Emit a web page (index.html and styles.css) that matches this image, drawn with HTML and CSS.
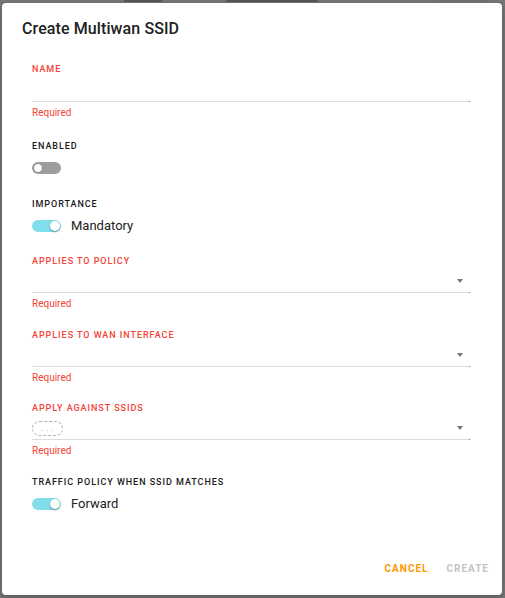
FILE: index.html
```html
<!DOCTYPE html>
<html lang="en">
<head>
<meta charset="utf-8">
<title>Create Multiwan SSID</title>
<link rel="stylesheet" href="styles.css">
</head>
<body>
<div class="backdrop">
  <div class="bg-row">
    <span class="bg-mark bg-a"></span>
    <span class="bg-mark bg-b"></span>
    <span class="bg-pill"></span>
  </div>
  <div class="dialog">
    <h1 class="title">Create Multiwan SSID</h1>
    <div class="form">
      <div class="field f-name">
        <div class="label err">NAME</div>
        <div class="input text"><span class="end-dot"></span></div>
        <div class="helper">Required</div>
      </div>

      <div class="field f-enabled">
        <div class="label">ENABLED</div>
        <div class="switch-row">
          <span class="switch off"><span class="thumb"></span></span>
        </div>
      </div>

      <div class="field f-importance">
        <div class="label">IMPORTANCE</div>
        <div class="switch-row">
          <span class="switch on"><span class="thumb"></span></span>
          <span class="switch-text">Mandatory</span>
        </div>
      </div>

      <div class="field f-policy">
        <div class="label err">APPLIES TO POLICY</div>
        <div class="input select"><span class="arrow"></span><span class="end-dot"></span></div>
        <div class="helper">Required</div>
      </div>

      <div class="field f-wan">
        <div class="label err">APPLIES TO WAN INTERFACE</div>
        <div class="input select"><span class="arrow"></span><span class="end-dot"></span></div>
        <div class="helper">Required</div>
      </div>

      <div class="field f-ssids">
        <div class="label err">APPLY AGAINST SSIDS</div>
        <div class="input select chips"><span class="chip">. . .</span><span class="arrow"></span><span class="end-dot"></span></div>
        <div class="helper">Required</div>
      </div>

      <div class="field f-traffic">
        <div class="label">TRAFFIC POLICY WHEN SSID MATCHES</div>
        <div class="switch-row">
          <span class="switch on"><span class="thumb"></span></span>
          <span class="switch-text">Forward</span>
        </div>
      </div>
    </div>
    <div class="actions">
      <button class="btn cancel">CANCEL</button>
      <button class="btn create" disabled>CREATE</button>
    </div>
  </div>
</div>
</body>
</html>
```
FILE: styles.css
```css
* { box-sizing: border-box; }
html, body {
  margin: 0;
  padding: 0;
  width: 505px;
  height: 598px;
  overflow: hidden;
  font-family: Roboto, "Noto Sans", "Liberation Sans", sans-serif;
}
.backdrop {
  position: relative;
  width: 505px;
  height: 598px;
  background: #777777;
  padding: 3px 0 0 2px;
}
.bg-row {
  position: absolute;
  top: 0;
  left: 0;
  width: 505px;
  height: 3px;
  overflow: hidden;
}
.bg-mark {
  position: absolute;
  top: 0;
  height: 2px;
  background: #555555;
  filter: blur(0.5px);
}
.bg-a { left: 124px; width: 38px; }
.bg-b { left: 226px; width: 92px; }
.bg-pill {
  position: absolute;
  top: 0;
  left: 436px;
  width: 54px;
  height: 8px;
  border-radius: 8px;
  background: #6e6e6e;
}
.dialog {
  width: 500px;
  height: 592px;
  background: #ffffff;
  border-radius: 4px;
  display: flex;
  flex-direction: column;
  padding: 16px 0 0 0;
  box-shadow: 0 2px 6px rgba(0,0,0,0.3);
}
.title {
  margin: 0;
  padding: 0 20px;
  font-size: 16px;
  line-height: 20px;
  font-weight: 500;
  letter-spacing: 0.1px;
  color: #212121;
}
.form {
  padding: 0 32px 0 30px;
  display: flex;
  flex-direction: column;
}
.label {
  font-size: 9px;
  line-height: 12px;
  font-weight: 500;
  letter-spacing: 0.95px;
  color: #1a1a1a;
}
.label.err { color: #f44336; }
.input {
  position: relative;
  height: 27px;
  border-bottom: 1px solid #dcdcdc;
}
.input.select { height: 26px; }
.end-dot {
  position: absolute;
  right: 0;
  bottom: -1px;
  width: 1px;
  height: 1px;
  background: #f44336;
}
.arrow {
  position: absolute;
  right: 7px;
  top: 12px;
  width: 0;
  height: 0;
  border-left: 3.5px solid transparent;
  border-right: 3.5px solid transparent;
  border-top: 4px solid #757575;
}
.chips { display: flex; align-items: flex-start; padding-top: 7px; }
.chip {
  display: inline-flex;
  align-items: center;
  justify-content: center;
  width: 31px;
  height: 15px;
  border: 1px dashed #b0b0b0;
  border-radius: 8px;
  font-size: 8px;
  line-height: 8px;
  color: #9e9e9e;
  letter-spacing: 0.5px;
}
.helper {
  margin-top: 5px;
  font-size: 10px;
  line-height: 12px;
  color: #f44336;
}
.f-name { margin-top: 24px; }
.f-enabled { margin-top: 21px; }
.f-importance { margin-top: 24px; }
.f-policy { margin-top: 23px; }
.f-wan { margin-top: 19px; }
.f-ssids { margin-top: 18px; }
.f-traffic { margin-top: 19px; }
.switch-row {
  margin-top: 10px;
  height: 12px;
  display: flex;
  align-items: center;
  gap: 10px;
}
.switch {
  position: relative;
  width: 29px;
  height: 12px;
  border-radius: 6px;
  flex: none;
}
.switch.off { background: #9e9e9e; }
.switch.on { background: #80deea; }
.thumb {
  position: absolute;
  top: 1px;
  width: 10px;
  height: 10px;
  border-radius: 50%;
  background: #ffffff;
}
.switch.off .thumb { left: 1px; border: 1px solid #8a8a8a; }
.switch.on .thumb { right: 1px; box-shadow: 0 1px 2px rgba(0,0,0,0.35); }
.switch-text {
  font-size: 13px;
  line-height: 16px;
  color: #212121;
}
.actions {
  margin-top: auto;
  display: flex;
  justify-content: flex-end;
  gap: 2px;
  padding: 0 5px 12px 0;
}
.btn {
  background: none;
  border: 0;
  padding: 8px 8px;
  font-family: inherit;
  font-size: 10px;
  line-height: 12px;
  font-weight: 700;
  letter-spacing: 1px;
}
.btn.cancel { color: #ff9800; }
.btn.create { color: #c4c4c4; }
```
